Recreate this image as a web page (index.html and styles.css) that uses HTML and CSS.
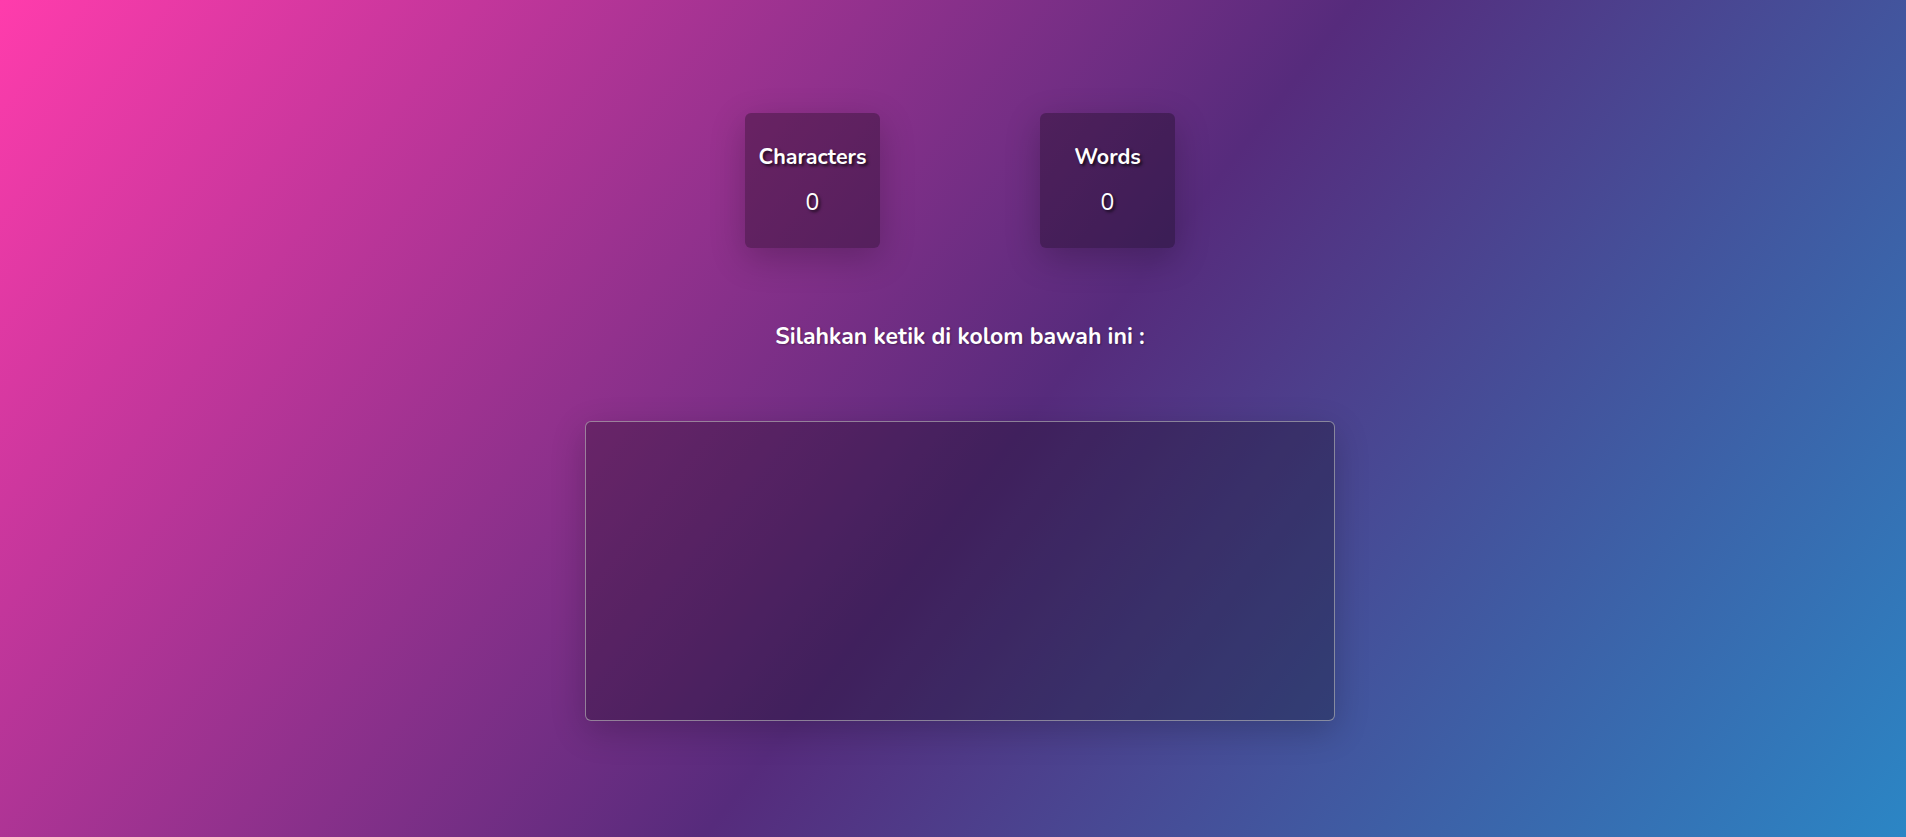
FILE: index.html
```html
<!DOCTYPE html>
<html lang="id">
<head>
<meta charset="utf-8">
<title>Character &amp; Word Counter</title>
<link rel="stylesheet" href="styles.css">
</head>
<body>
<main class="page">
  <section class="stats">
    <div class="card">
      <h2 class="card-title">Characters</h2>
      <p class="card-value">0</p>
    </div>
    <div class="card">
      <h2 class="card-title">Words</h2>
      <p class="card-value">0</p>
    </div>
  </section>
  <h1 class="prompt">Silahkan ketik di kolom bawah ini :</h1>
  <textarea class="input" aria-label="Teks"></textarea>
</main>
</body>
</html>
```
FILE: styles.css
```css
html, body {
  margin: 0;
  padding: 0;
  height: 100%;
}
body {
  font-family: "Nunito", "Lato", "Noto Sans", sans-serif;
  color: #fff;
  background: linear-gradient(128deg, #ff3cac 0%, #562b7c 53%, #2b86c5 100%);
  overflow: hidden;
}
.page {
  box-sizing: border-box;
  min-height: 100%;
  padding: 113px 0 0 14px;
  display: flex;
  flex-direction: column;
  align-items: center;
}
.stats {
  display: flex;
  gap: 160px;
}
.card {
  width: 135px;
  height: 135px;
  border-radius: 6px;
  background: rgba(0, 0, 0, 0.3);
  box-shadow: 0 10px 35px rgba(0, 0, 0, 0.22);
  display: flex;
  flex-direction: column;
  align-items: center;
  justify-content: center;
}
.card-title {
  margin: 0;
  font-size: 21.5px;
  font-weight: 700;
  line-height: 26px;
  text-shadow: 2px 2px 3px rgba(0, 0, 0, 0.7);
}
.card-value {
  margin: 19px 0 0;
  font-size: 23px;
  font-weight: 400;
  line-height: 28px;
  text-shadow: 2px 2px 3px rgba(0, 0, 0, 0.7);
}
.prompt {
  margin: 74px 0 0;
  font-size: 23px;
  font-weight: 700;
  line-height: 30px;
  text-shadow: 1px 1px 2px rgba(0, 0, 0, 0.3);
}
.input {
  box-sizing: border-box;
  margin-top: 69px;
  width: 750px;
  height: 300px;
  border: 1px solid rgba(190, 190, 190, 0.6);
  border-radius: 6px;
  background: rgba(0, 0, 0, 0.25);
  box-shadow: 0 10px 35px rgba(0, 0, 0, 0.2);
  color: #fff;
  font: inherit;
  resize: none;
  outline: none;
}
```
